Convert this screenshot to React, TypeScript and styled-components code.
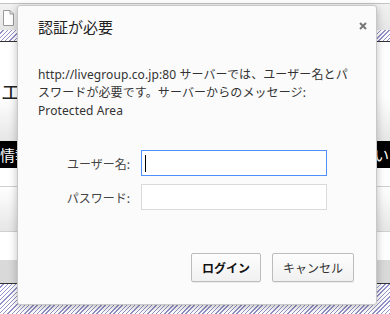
import React from 'react'
import styled, { createGlobalStyle } from 'styled-components'

const GlobalStyle = createGlobalStyle`
    html, body {
        margin: 0;
        padding: 0;
        background: #ffffff;
    }
    body {
        font-family: "Noto Sans", "Noto Sans CJK JP", sans-serif;
    }
`

const Screen = styled.div`
    position: relative;
    width: 390px;
    height: 314px;
    overflow: hidden;
    display: flex;
    flex-direction: column;
`

// ---- page behind the dialog ----

const TopBar = styled.div`
    height: 28px;
    border-top: 1px solid #c4c4c4;
    margin-top: 3px;
    background: linear-gradient(#f2f2f2, #e6e6e6);
    display: flex;
    align-items: flex-start;
    padding: 6px 0 0 3px;
    box-sizing: content-box;
`

const Hatch = styled.div<{ $h: number }>`
    height: ${({ $h }) => $h}px;
    flex-shrink: 0;
    background: repeating-linear-gradient(135deg, #ffffff 0 2px, #9292cc 2px 3px);
`

const Rule = styled.div<{ $color?: string }>`
    height: 1px;
    flex-shrink: 0;
    background: ${({ $color }) => $color || '#333333'};
`

const Banner = styled.div`
    height: 99px;
    flex-shrink: 0;
    background: linear-gradient(#ffffff 55%, #e6e6e6);
    display: flex;
    align-items: center;
    padding-left: 1px;
    font-family: "Noto Sans CJK JP", sans-serif;
    font-size: 20px;
    color: #222;
`

const NavBar = styled.div`
    height: 27px;
    flex-shrink: 0;
    background: #000000;
    color: #ffffff;
    display: flex;
    justify-content: space-between;
    align-items: center;
    font-family: "Noto Sans CJK JP", sans-serif;
    font-size: 15px;
    padding: 0 1px 0 0;
`

const Row = styled.div<{ $h: number; $bg: string }>`
    height: ${({ $h }) => $h}px;
    flex-shrink: 0;
    background: ${({ $bg }) => $bg};
`

// ---- dialog ----

const Dialog = styled.div`
    position: absolute;
    left: 17px;
    top: 5px;
    width: 360px;
    height: 300px;
    box-sizing: border-box;
    background: #fbfbfb;
    border: 1px solid #c8c8c8;
    border-radius: 3px;
    box-shadow: 0 2px 8px rgba(0, 0, 0, 0.25);
    display: flex;
    flex-direction: column;
    color: #333333;
`

const Header = styled.div`
    display: flex;
    justify-content: space-between;
    align-items: center;
    padding: 12px 9px 0 20px;
`

const Title = styled.h1`
    margin: 0;
    font-family: "Noto Sans CJK JP", sans-serif;
    font-size: 15px;
    font-weight: 400;
    line-height: 18px;
    color: #222222;
`

const CloseButton = styled.button`
    border: 0;
    padding: 0;
    background: none;
    width: 8px;
    height: 8px;
    display: flex;
    margin-top: -2px;
    cursor: pointer;
`

const Message = styled.p`
    margin: 30px 20px 0;
    font-size: 12px;
    line-height: 18px;
    letter-spacing: 0.1px;
`

const Form = styled.div`
    margin: 30px 0 0 20px;
    display: grid;
    grid-template-columns: 92px 186px;
    column-gap: 11px;
    row-gap: 8px;
    align-items: center;
`

const Label = styled.label`
    text-align: right;
    font-family: "Noto Sans CJK JP", sans-serif;
    font-size: 12px;
    color: #444444;
    white-space: nowrap;
`

const Field = styled.div<{ $focused?: boolean }>`
    height: 26px;
    box-sizing: border-box;
    background: #ffffff;
    border: 1px solid ${({ $focused }) => ($focused ? '#4d90fe' : '#dadada')};
    display: flex;
    align-items: center;
    padding-left: 3px;
`

const Caret = styled.span`
    width: 1px;
    height: 17px;
    background: #000000;
`

const Actions = styled.div`
    margin: 43px 22px 0 0;
    display: flex;
    justify-content: flex-end;
    gap: 11px;
`

const Button = styled.button<{ $primary?: boolean }>`
    height: 29px;
    padding: 0 10px;
    font-family: "Noto Sans CJK JP", sans-serif;
    font-size: 12px;
    font-weight: ${({ $primary }) => ($primary ? 700 : 400)};
    color: ${({ $primary }) => ($primary ? '#111111' : '#333333')};
    background: linear-gradient(#fdfdfd, #f1f1f1);
    border: 1px solid #bcbcbc;
    border-radius: 2px;
    box-shadow: 0 1px 0 rgba(0, 0, 0, 0.06);
    cursor: pointer;
`

const PageIcon = () => (
    <svg width="11" height="16" viewBox="0 0 11 16">
        <path d="M0.5 0.5 H7 L10.5 4 V15.5 H0.5 Z" fill="#ffffff" stroke="#9a9a9a" />
        <path d="M7 0.5 V4 H10.5" fill="none" stroke="#9a9a9a" />
    </svg>
)

const CloseIcon = () => (
    <svg width="8" height="8" viewBox="0 0 8 8">
        <path d="M1 1 L7 7 M7 1 L1 7" stroke="#777777" strokeWidth="2" />
    </svg>
)

export default function App() {
    return (
        <>
            <GlobalStyle />
            <Screen>
                <TopBar>
                    <PageIcon />
                </TopBar>
                <Hatch $h={11} />
                <Rule />
                <Banner>エ</Banner>
                <NavBar>
                    <span>情報</span>
                    <span>問い</span>
                </NavBar>
                <Row $h={18} $bg="#ffffff" />
                <Rule $color="#d0d0d0" />
                <Row $h={44} $bg="linear-gradient(#ffffff, #e6e6e6)" />
                <Rule $color="#d0d0d0" />
                <Row $h={28} $bg="#ffffff" />
                <Row $h={23} $bg="#d9d9d9" />
                <Rule />
                <Hatch $h={30} />

                <Dialog>
                    <Header>
                        <Title>認証が必要</Title>
                        <CloseButton aria-label="閉じる">
                            <CloseIcon />
                        </CloseButton>
                    </Header>
                    <Message>
                        http://livegroup.co.jp:80 サーバーでは、ユーザー名とパ<br />
                        スワードが必要です。サーバーからのメッセージ:<br />
                        Protected Area
                    </Message>
                    <Form>
                        <Label>ユーザー名:</Label>
                        <Field $focused>
                            <Caret />
                        </Field>
                        <Label>パスワード:</Label>
                        <Field />
                    </Form>
                    <Actions>
                        <Button $primary>ログイン</Button>
                        <Button>キャンセル</Button>
                    </Actions>
                </Dialog>
            </Screen>
        </>
    )
}
